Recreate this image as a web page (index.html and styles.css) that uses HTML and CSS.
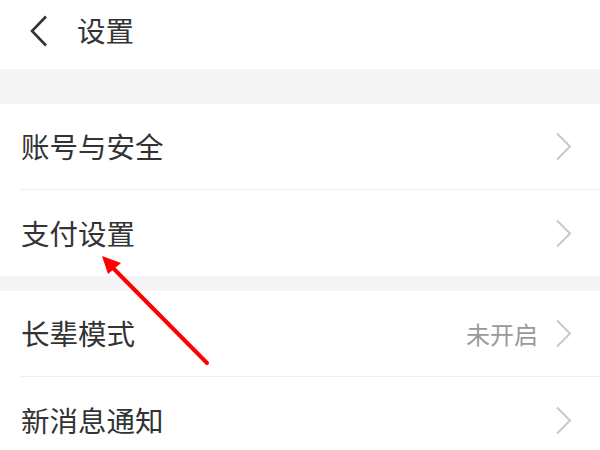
FILE: index.html
```html
<!DOCTYPE html>
<html lang="zh">
<head>
<meta charset="utf-8">
<link rel="stylesheet" href="styles.css">
</head>
<body>
<div class="page">
  <header class="topbar">
    <svg class="back" width="20" height="32" viewBox="0 0 20 32"><polyline points="17,1.5 3,16 17,30.5" fill="none" stroke="#333" stroke-width="2.6"/></svg>
    <h1 class="title">设置</h1>
  </header>
  <div class="gap gap-top"></div>
  <section class="group">
    <div class="row"><span class="label">账号与安全</span><span class="right"><svg class="chev" width="17" height="29" viewBox="0 0 17 29"><polyline points="2,1.5 15,14.5 2,27.5" fill="none" stroke="#c8c8c8" stroke-width="2"/></svg></span></div>
    <div class="row"><span class="label">支付设置</span><span class="right"><svg class="chev" width="17" height="29" viewBox="0 0 17 29"><polyline points="2,1.5 15,14.5 2,27.5" fill="none" stroke="#c8c8c8" stroke-width="2"/></svg></span></div>
  </section>
  <div class="gap gap-mid"></div>
  <section class="group">
    <div class="row"><span class="label">长辈模式</span><span class="right"><span class="value">未开启</span><svg class="chev" width="17" height="29" viewBox="0 0 17 29"><polyline points="2,1.5 15,14.5 2,27.5" fill="none" stroke="#c8c8c8" stroke-width="2"/></svg></span></div>
    <div class="row"><span class="label">新消息通知</span><span class="right"><svg class="chev" width="17" height="29" viewBox="0 0 17 29"><polyline points="2,1.5 15,14.5 2,27.5" fill="none" stroke="#c8c8c8" stroke-width="2"/></svg></span></div>
  </section>
  <svg class="arrow" width="600" height="450" viewBox="0 0 600 450">
    <line x1="207" y1="363" x2="112" y2="267" stroke="#ff0000" stroke-width="4" stroke-linecap="round"/>
    <polygon points="102,256 121,263 108,274" fill="#ff0000"/>
  </svg>
</div>
</body>
</html>
```
FILE: styles.css
```css
* { box-sizing: border-box; margin: 0; padding: 0; }
html, body { background: #ffffff; }
body {
  font-family: "Noto Sans CJK SC", "Noto Sans", sans-serif;
  color: #333333;
  width: 600px;
  height: 450px;
  overflow: hidden;
}
.page { position: relative; width: 600px; height: 450px; }
.topbar {
  height: 69px;
  display: flex;
  align-items: center;
  padding-left: 29px;
  padding-bottom: 8px;
}
.back { display: block; }
.title {
  font-size: 28.5px;
  font-weight: 400;
  margin-left: 28px;
  line-height: 1;
  color: #333;
}
.gap { background: #f4f4f4; }
.gap-top { height: 35px; }
.gap-mid { height: 15px; }
.group { background: #fff; }
.row {
  height: 86px;
  margin-left: 20px;
  padding-right: 28px;
  display: flex;
  align-items: center;
  justify-content: space-between;
  border-bottom: 1px solid #efefef;
}
.row:last-child { border-bottom: none; }
.label { font-size: 28.5px; line-height: 1; padding-left: 1px; color: #333; }
.right { display: flex; align-items: center; }
.value { font-size: 24px; color: #999; margin-right: 17px; line-height: 1; }
.chev { display: block; }
.arrow { position: absolute; left: 0; top: 0; pointer-events: none; }
```
